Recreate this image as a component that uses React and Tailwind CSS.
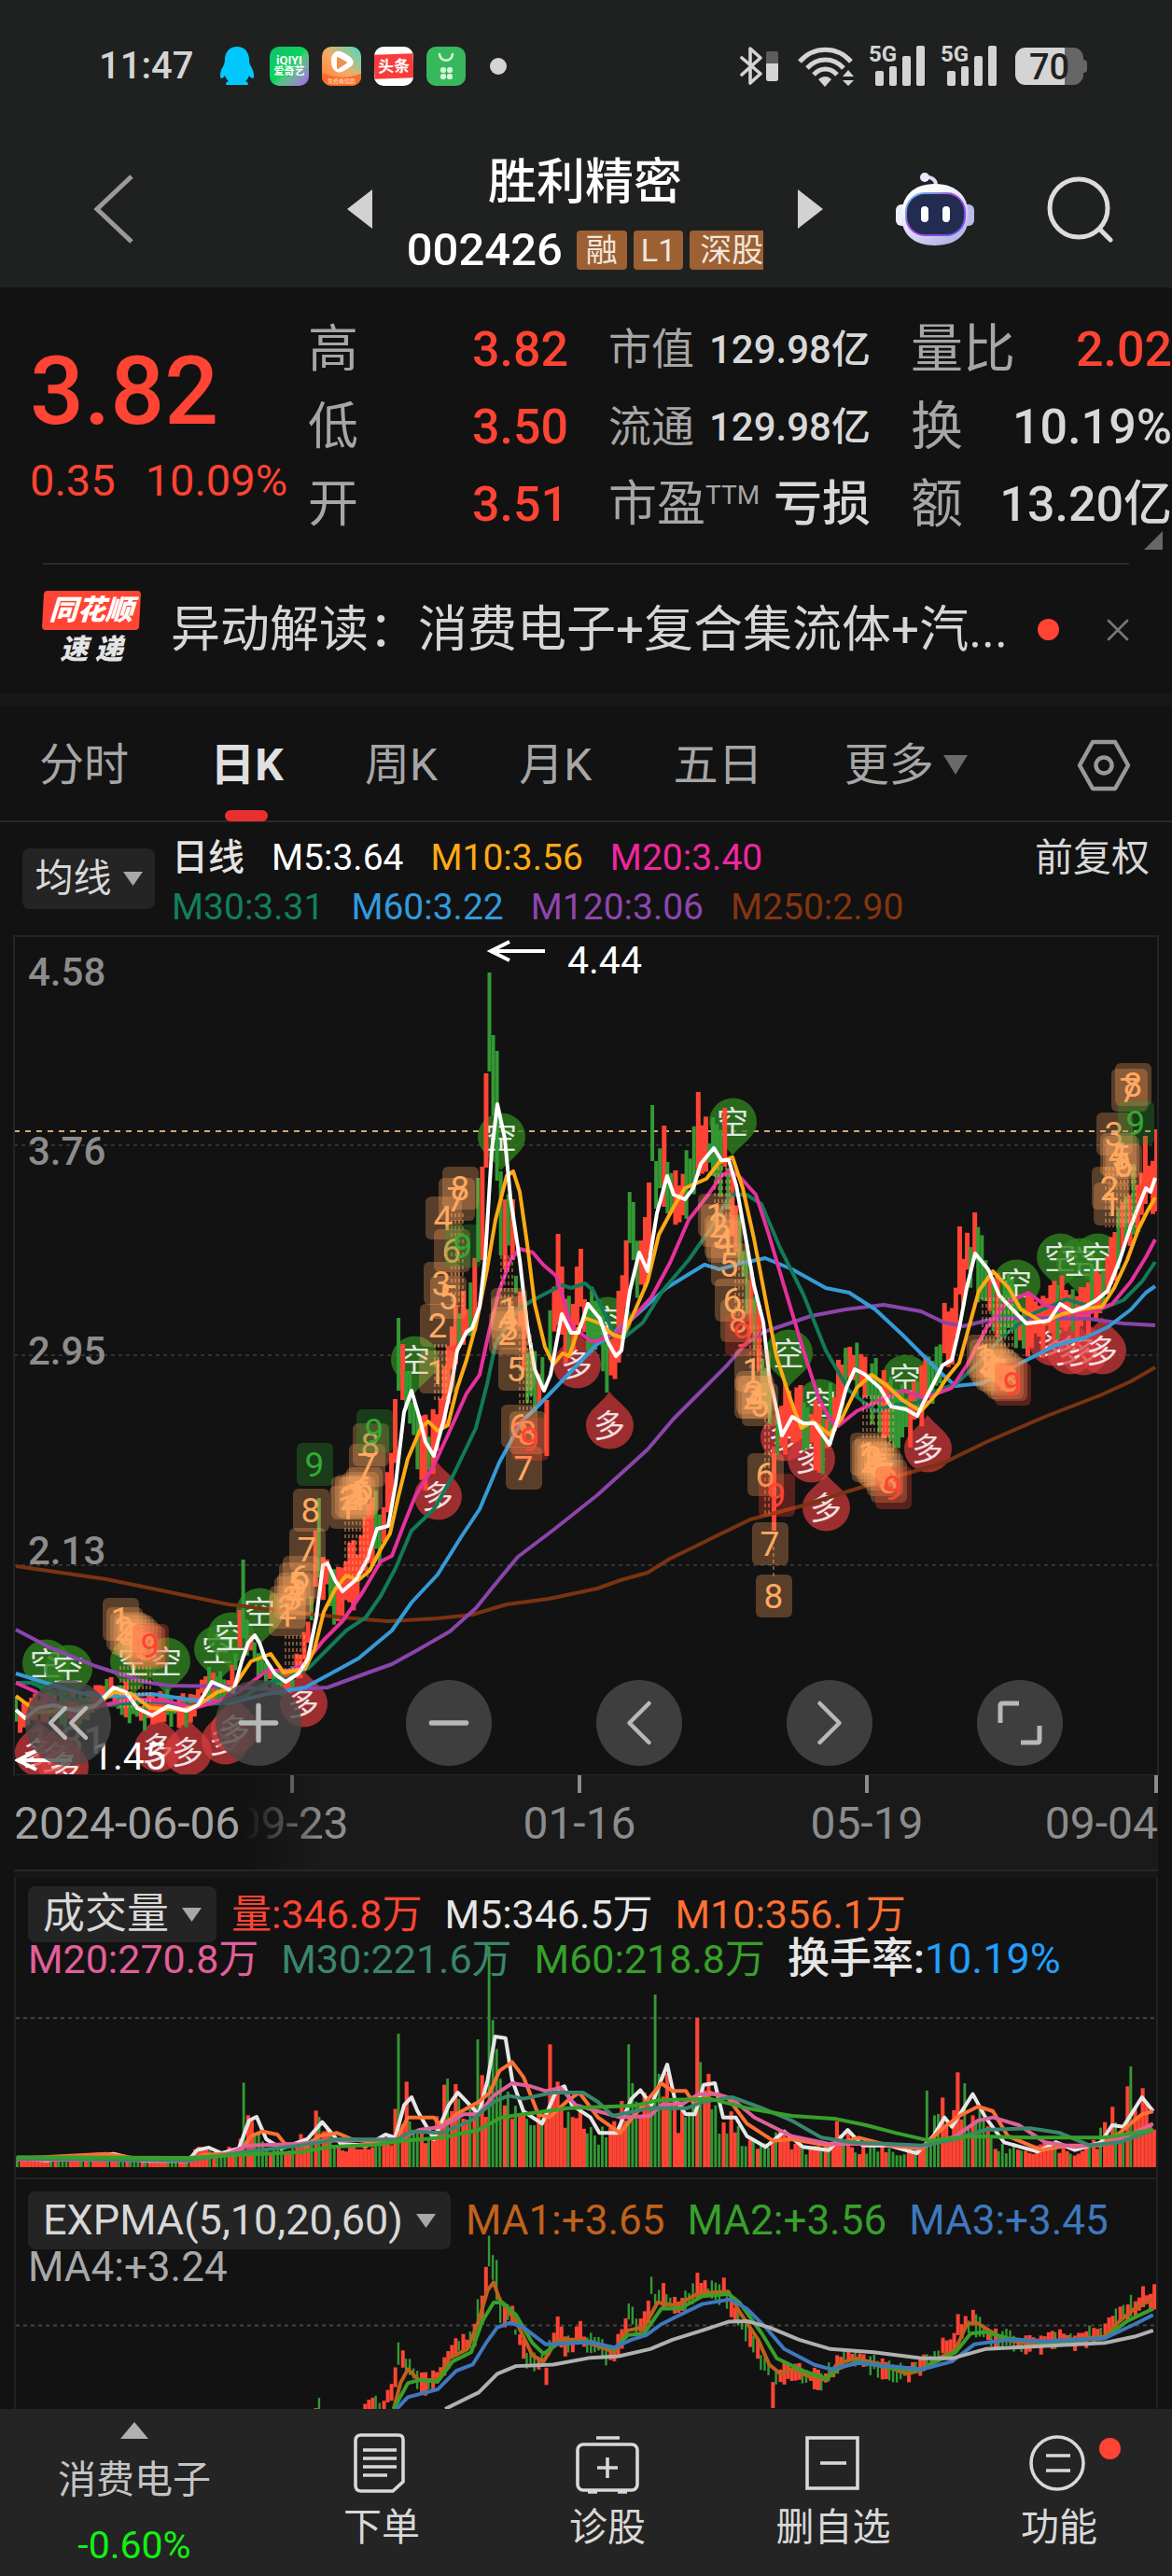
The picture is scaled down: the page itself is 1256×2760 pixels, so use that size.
import { ChevronLeft, ChevronRight, ChevronsLeft, Minus, Plus, X } from 'lucide-react';

const RED = '#ff4433';
const GREEN = '#339933';

const parse = (s) => s.trim().split(/\s+/).map((p) => p.split(',').map(Number));

// moving averages of the price chart
const M5 = parse(`17,1832 27,1841 41,1830 57,1827 82,1833 102,1828 122,1808 135,1813 147,1830 163,1838 180,1828 200,1833 212,1827 227,1802 241,1808 250,1813 259,1780 266,1760 273,1752 278,1760 284,1777 295,1794 306,1802 320,1793 330,1777 339,1733 346,1677 351,1675 359,1693 367,1705 382,1692 394,1670 404,1638 416,1635 424,1590 433,1513 441,1490 449,1517 456,1545 465,1560 476,1520 484,1483 490,1447 500,1427 506,1423 514,1400 520,1347 527,1233 533,1183 541,1220 547,1283 557,1350 565,1420 573,1467 583,1490 590,1473 602,1408 612,1428 620,1428 630,1397 643,1413 651,1437 660,1453 666,1447 675,1383 685,1342 694,1362 704,1300 715,1260 722,1280 734,1285 743,1273 751,1247 765,1230 773,1243 781,1243 789,1270 798,1320 808,1377 818,1417 825,1480 828,1490 838,1538 849,1518 861,1525 873,1525 889,1548 898,1520 907,1487 916,1467 926,1472 943,1487 955,1507 971,1510 983,1517 991,1500 1000,1483 1010,1463 1020,1457 1028,1423 1036,1380 1045,1343 1059,1360 1071,1388 1085,1403 1100,1418 1124,1415 1136,1397 1149,1405 1163,1400 1175,1393 1187,1383 1200,1350 1212,1313 1220,1293 1228,1273 1233,1277 1238,1262`);

const AVERAGES = [
  { color: '#7a3312', points: parse(`17,1678 114,1692 163,1702 245,1719 294,1725 367,1733 416,1737 469,1734 506,1730 543,1719 588,1713 640,1702 665,1693 694,1685 718,1670 755,1652 804,1628 861,1613 902,1600 967,1580 1012,1567 1057,1545 1122,1517 1179,1495 1212,1480 1238,1465`) },
  { color: '#8a45ab', points: parse(`17,1746 53,1765 102,1785 155,1802 180,1806 245,1807 302,1811 351,1808 392,1793 420,1783 449,1767 482,1748 510,1723 531,1697 555,1668 592,1640 640,1602 661,1583 694,1553 722,1520 759,1483 779,1463 796,1443 816,1428 869,1410 906,1403 947,1398 987,1405 1012,1417 1032,1421 1065,1413 1106,1412 1167,1413 1204,1418 1238,1420`) },
  { color: '#359bd8', points: parse(`17,1793 49,1803 82,1813 110,1818 163,1815 196,1820 245,1825 286,1815 327,1808 351,1795 384,1777 420,1747 441,1717 469,1687 494,1647 514,1617 535,1567 559,1523 576,1507 600,1482 640,1440 673,1417 714,1380 755,1355 771,1360 796,1353 820,1348 849,1360 885,1380 910,1385 938,1403 967,1430 1004,1467 1024,1485 1053,1482 1089,1463 1130,1442 1163,1433 1187,1422 1212,1403 1228,1385 1238,1378`) },
  { color: '#127a59', points: parse(`17,1803 33,1803 57,1813 82,1822 106,1828 163,1823 204,1827 237,1825 261,1818 286,1803 310,1798 331,1787 351,1767 371,1747 392,1733 408,1710 424,1680 441,1640 465,1617 486,1580 510,1530 522,1483 531,1440 555,1403 571,1393 602,1377 612,1380 627,1375 636,1383 649,1410 657,1427 669,1433 689,1417 710,1383 738,1350 759,1320 783,1280 800,1280 816,1290 836,1337 861,1387 885,1447 910,1490 938,1512 959,1505 983,1503 1004,1490 1024,1483 1049,1460 1073,1433 1106,1408 1143,1392 1179,1403 1204,1393 1224,1373 1238,1352`) },
  { color: '#e6309c', points: parse(`17,1803 37,1812 57,1823 78,1835 106,1828 143,1820 180,1823 208,1830 233,1823 257,1812 286,1790 310,1790 327,1782 347,1757 367,1737 388,1707 408,1673 420,1667 433,1633 445,1603 465,1570 482,1533 500,1493 514,1473 524,1427 535,1383 547,1350 557,1338 571,1342 582,1355 596,1367 604,1393 612,1420 633,1437 640,1437 661,1427 677,1413 698,1390 718,1353 738,1307 759,1280 773,1260 781,1255 792,1260 810,1280 824,1323 840,1377 861,1447 877,1497 889,1520 898,1528 918,1512 943,1500 969,1490 991,1498 1020,1487 1036,1463 1057,1423 1077,1397 1102,1385 1118,1397 1143,1407 1167,1407 1192,1397 1212,1373 1228,1347 1238,1328`) },
  { color: '#ffaa14', points: parse(`17,1817 41,1835 61,1833 102,1827 122,1813 141,1815 161,1830 196,1832 212,1827 233,1813 250,1808 269,1780 290,1772 304,1792 327,1788 337,1767 347,1727 359,1703 371,1688 384,1693 396,1683 408,1660 418,1643 427,1603 437,1563 451,1530 459,1523 469,1533 480,1527 490,1487 500,1457 510,1420 522,1360 531,1307 543,1260 550,1255 557,1277 565,1333 573,1397 584,1443 593,1462 603,1450 610,1453 620,1423 627,1412 643,1418 657,1430 667,1433 681,1403 694,1373 706,1323 722,1293 734,1273 757,1263 771,1245 785,1240 796,1273 808,1327 820,1390 832,1453 843,1487 851,1510 859,1530 871,1523 889,1537 902,1520 918,1487 934,1473 951,1485 967,1500 987,1512 1004,1493 1014,1477 1028,1460 1049,1383 1064,1362 1081,1380 1094,1403 1118,1417 1138,1408 1163,1402 1181,1400 1194,1380 1208,1350 1220,1317 1230,1297 1238,1283`) },
  { color: '#ffffff', points: M5 },
];

// x, high, low, up
const PEAKS = [
  [261, 1671, 1755, 0], [257, 1725, 1765, 1], [341, 1605, 1690, 0], [337, 1640, 1700, 1], [429, 1412, 1490, 0], [433, 1440, 1500, 1],
  [512, 1262, 1352, 0], [517, 1250, 1350, 1], [521, 1150, 1251, 1], [525, 1042, 1148, 0], [529, 1109, 1195, 0],
  [533, 1126, 1265, 0], [537, 1255, 1345, 0], [541, 1285, 1360, 1], [549, 1285, 1350, 1], [585, 1500, 1560, 1],
  [597, 1322, 1420, 1], [601, 1357, 1430, 1], [617, 1357, 1420, 1], [621, 1338, 1400, 1], [649, 1440, 1492, 0],
  [669, 1329, 1400, 1], [673, 1277, 1332, 0], [677, 1288, 1350, 0], [697, 1267, 1345, 1], [701, 1184, 1244, 0],
  [705, 1244, 1295, 0], [713, 1206, 1293, 1], [749, 1170, 1260, 1], [765, 1197, 1260, 0], [777, 1187, 1250, 1],
  [829, 1550, 1640, 1], [1013, 1396, 1450, 1], [1029, 1314, 1387, 1], [1045, 1299, 1350, 1], [1225, 1217, 1290, 1],
  [1239, 1210, 1298, 1],
];

const noise = (n) => {
  const v = Math.sin(n * 12.9898) * 43758.5453;
  return v - Math.floor(v);
};

function valueAt(points, x) {
  const i = points.findIndex((p) => p[0] >= x);
  if (i === -1) return points[points.length - 1][1];
  if (i === 0) return points[0][1];
  const [x0, y0] = points[i - 1];
  const [x1, y1] = points[i];
  return y0 + ((y1 - y0) * (x - x0)) / (x1 - x0);
}

const CANDLES = Array.from({ length: 302 }, (_, i) => {
  const x = 17 + i * 4.06;
  const peak = PEAKS.find((p) => Math.abs(p[0] - x) <= 2.03);
  if (peak) return { x, top: peak[1], bottom: peak[2], up: !!peak[3] };
  const mid = valueAt(M5, x + 7);
  const size = x < 330 ? 0.5 : 1;
  const rising = valueAt(M5, x + 10) <= valueAt(M5, x + 1);
  return {
    x,
    top: mid - (8 + 34 * noise(i + 1)) * size,
    bottom: mid + (8 + 34 * noise(i + 400)) * size,
    up: rising ? noise(i + 77) < 0.78 : noise(i + 77) < 0.38,
  };
});

// center x, center y, digit, tone
const COUNTS = `129,1735,1,o 133,1745,2,o 137,1750,3,o 141,1752,4,o 145,1754,5,o 149,1758,6,o 153,1762,7,o 157,1765,8,o 161,1763,9,r
307,1730,1,o 308,1722,2,o 313,1712,3,o 316,1708,4,o 318,1697,5,o 322,1690,6,o 329,1660,7,o 333,1618,8,o 337,1569,9,g
372,1615,1,o 374,1605,2,o 378,1603,3,o 382,1605,4,o 386,1600,5,o 390,1595,6,o 393,1570,7,o 397,1548,8,o 401,1533,9,g
468,1470,1,o 469,1420,2,o 473,1375,3,o 475,1305,4,o 480,1390,5,o 484,1340,6,o 489,1285,7,o 493,1273,8,o 496,1335,9,g
545,1403,1,o 543,1428,2,o 546,1423,3,o 545,1412,4,o 553,1467,5,o 556,1528,6,o 561,1573,7,o 565,1535,8,o 568,1542,9,r
767,1302,1,o 770,1313,2,o 774,1325,3,o 776,1330,4,o 781,1355,5,o 785,1393,6,o 791,1415,8,o 796,1430,9,r
806,1468,1,o 806,1497,2,o 808,1492,3,o 810,1497,4,o 814,1505,5,o 820,1580,6,o 825,1654,7,o 829,1710,8,o 832,1602,9,r
930,1558,1,o 932,1565,2,o 935,1562,3,o 938,1568,4,o 941,1570,5,o 945,1574,6,o 948,1580,7,o 952,1587,8,o 957,1594,9,r
1055,1453,1,o 1058,1458,2,o 1061,1463,3,o 1065,1467,4,o 1069,1469,5,o 1073,1472,6,o 1077,1476,7,o 1081,1478,8,o 1085,1483,9,r
1191,1290,1,o 1189,1273,2,o 1194,1215,3,o 1198,1237,4,o 1201,1240,5,o 1204,1248,6,o 1210,1168,7,o 1214,1162,8,o 1217,1203,9,g`
  .split(/\s+/)
  .map((s) => s.split(','));

const TONES = {
  o: { box: '#ffa55f', text: '#ffaa60' },
  g: { box: '#33a033', text: '#33a833' },
  r: { box: '#ff4433', text: '#ff4433' },
};

// dashed strings between the count boxes and their candles: x from, x to, y from, y to
const STRINGS = [
  [129, 161, 1785, 1830], [306, 326, 1752, 1790], [370, 394, 1630, 1690], [466, 478, 1440, 1500], [484, 496, 1300, 1400],
  [537, 549, 1345, 1400], [557, 569, 1430, 1512], [766, 782, 1250, 1310], [788, 796, 1350, 1410], [804, 818, 1420, 1470],
  [820, 824, 1520, 1625], [829, 829, 1650, 1690], [925, 957, 1495, 1560], [1053, 1085, 1390, 1450], [1185, 1217, 1250, 1315],
];

const SHORTS = parse(`49,1782 73,1788 143,1780 178,1780 233,1767 247,1753 278,1727 444,1457 537,1218 651,1415 785,1202 845,1450 879,1503 970,1477 1089,1375 1136,1347 1157,1352 1176,1347`);
const LONGS = parse(`41,1878 61,1883 69,1893 169,1873 201,1877 241,1865 251,1853 325,1825 469,1603 618,1462 653,1527 840,1540 869,1563 885,1615 994,1552 1128,1438 1147,1447 1161,1448 1181,1447`);

const VOLUME_M5 = parse(`20,930 60,938 110,925 150,917 190,940 250,940 262,905 278,897 295,915 318,900 332,810 342,798 355,870 375,900 410,870 430,815 455,885 490,890 515,855 528,865 540,760 550,735 558,780 580,870 600,760 612,720 640,790 652,680 662,540 676,545 685,680 700,780 725,820 745,710 755,700 765,760 790,800 802,850 825,850 845,740 857,712 872,760 893,630 903,740 918,790 930,790 942,695 957,690 968,800 985,800 1000,860 1025,895 1050,845 1075,895 1110,905 1135,840 1155,890 1190,890 1228,915 1250,860 1265,800 1275,830 1303,725 1320,800 1345,880 1390,910 1415,880 1440,905 1475,880 1490,825 1505,830 1530,735 1545,780`);

const VOLUME_LINES = [
  { color: '#e6e6e6', points: VOLUME_M5 },
  { color: '#ff7033', points: parse(`20,932 140,917 190,935 250,940 270,920 318,915 335,860 350,845 370,855 380,885 410,890 425,860 450,850 470,870 500,880 530,870 545,800 580,800 590,830 610,790 640,750 655,720 668,650 685,622 700,670 720,790 735,800 760,745 775,720 800,800 830,850 850,790 875,720 885,690 900,715 918,715 930,760 950,720 975,740 1000,820 1035,875 1060,870 1110,890 1150,865 1190,890 1235,900 1260,840 1285,795 1310,765 1330,780 1350,860 1395,905 1430,890 1475,890 1500,850 1530,790 1545,780`) },
  { color: '#e0609a', points: parse(`20,935 250,938 300,920 330,890 400,885 430,875 530,870 560,840 590,830 620,790 640,790 660,730 685,690 710,700 730,715 750,705 770,760 800,780 830,800 870,795 885,760 915,755 935,725 960,725 980,740 1010,800 1060,860 1110,885 1180,885 1235,895 1280,860 1310,810 1330,800 1365,825 1400,880 1440,895 1480,885 1510,860 1545,820`) },
  { color: '#3a866c', points: parse(`20,932 250,938 330,910 400,890 450,870 530,872 550,845 590,850 630,810 660,750 680,730 700,740 740,720 780,720 800,750 820,795 870,770 920,770 940,750 980,735 1020,770 1060,810 1100,865 1140,880 1235,890 1280,870 1320,840 1380,835 1420,850 1460,890 1500,880 1545,840`) },
  { color: '#37a02a', points: parse(`20,928 250,930 320,920 400,912 440,895 500,888 540,875 590,865 640,840 670,800 700,790 760,770 850,762 880,745 950,740 1000,770 1060,795 1120,805 1160,825 1200,850 1245,875 1300,860 1380,865 1480,865 1545,840`) },
];

// x, top, up
const VOLUME_PEAKS = [
  [325, 688, 0], [331, 793, 1], [420, 778, 1], [426, 798, 0], [535, 531, 0], [541, 685, 1], [591, 695, 1], [596, 675, 0],
  [611, 693, 1], [640, 549, 0], [646, 664, 1], [655, 250, 0], [661, 487, 0], [666, 580, 0], [670, 676, 0], [735, 565, 1],
  [746, 685, 1], [840, 565, 0], [845, 690, 0], [875, 405, 0], [880, 660, 0], [891, 658, 1], [935, 480, 1], [940, 622, 0],
  [950, 660, 1], [1120, 812, 1], [1244, 714, 0], [1264, 736, 1], [1284, 655, 1], [1290, 690, 0], [1489, 766, 1],
  [1509, 700, 1], [1514, 636, 0], [1530, 706, 1],
];

const VOLUMES = CANDLES.map((c, i) => {
  const x = 21 + i * 5.065;
  const peak = VOLUME_PEAKS.find((p) => Math.abs(p[0] - x) <= 2.54);
  if (peak) return { x, top: peak[1], up: !!peak[2] };
  const height = Math.min(960 - valueAt(VOLUME_M5, x + 8), 215);
  return { x, top: 960 - height * (0.6 + 0.6 * noise(i + 900)), up: c.up };
});

const EXPMA_LINES = [
  { color: '#bd611c', points: parse(`526,783 535,700 545,655 560,690 585,690 600,620 625,590 640,500 652,400 660,375 668,430 690,500 712,610 727,630 745,560 775,560 800,580 822,600 840,530 862,520 880,440 905,450 935,410 975,405 990,470 1015,560 1030,640 1045,670 1060,655 1085,680 1107,690 1120,640 1145,620 1180,640 1215,670 1238,655 1250,630 1280,590 1295,510 1308,505 1325,530 1345,560 1375,570 1480,550 1500,500 1520,460 1535,440 1545,430`) },
  { color: '#37a02a', points: parse(`526,783 545,700 560,690 585,695 605,630 630,600 645,500 660,440 672,440 690,480 712,570 727,605 745,575 790,565 822,590 840,545 862,540 885,460 910,460 940,420 975,412 990,440 1020,540 1040,620 1075,660 1107,685 1125,650 1150,630 1190,650 1230,660 1250,635 1280,600 1300,540 1320,535 1350,555 1400,570 1480,555 1510,500 1545,460`) },
  { color: '#3f78bd', points: parse(`530,783 545,745 585,720 610,660 632,640 650,570 665,520 682,505 700,520 730,575 790,568 822,585 845,560 865,545 885,510 910,480 940,445 978,430 1000,460 1025,520 1050,590 1090,640 1112,655 1150,635 1190,645 1235,655 1275,630 1305,575 1350,560 1400,565 1480,555 1520,510 1545,480`) },
  { color: '#b0b0b0', points: parse(`595,783 640,730 665,670 690,645 740,640 790,618 828,613 870,590 900,560 940,530 975,502 1000,500 1030,520 1070,560 1112,590 1170,600 1235,620 1275,620 1320,590 1400,580 1480,570 1520,550 1545,530`) },
];

function Line({ points, color, width = 4 }) {
  return (
    <polyline
      points={points.map((p) => p.join(',')).join(' ')}
      fill="none"
      stroke={color}
      strokeWidth={width}
      strokeLinejoin="round"
      vectorEffect="non-scaling-stroke"
    />
  );
}

function Caret({ className = 'h-[15px] w-[21px] text-[#a8a8a8]' }) {
  return (
    <svg viewBox="0 0 20 14" preserveAspectRatio="none" className={`fill-current ${className}`}>
      <path d="M0 0h20L10 14z" />
    </svg>
  );
}

function Signal() {
  return (
    <div className="relative h-[44px] w-[60px]">
      <span className="absolute -top-1 left-0 text-[24px] leading-[26px] font-bold">5G</span>
      <svg viewBox="0 0 60 44" className="h-full w-full fill-current">
        <rect x="7" y="27" width="9" height="16" rx="2" />
        <rect x="22" y="22" width="8" height="21" rx="2" />
        <rect x="36" y="11" width="9" height="32" rx="2" />
        <rect x="51" y="0" width="9" height="43" rx="2" />
      </svg>
    </div>
  );
}

function StatusBar() {
  return (
    <div className="flex items-center justify-between pt-[49px] pr-[91px] pl-[106px] text-[#d4d4d4]">
      <div className="flex h-[44px] items-center">
        <span className="w-[130px] text-[40px] leading-[44px] font-medium">11:47</span>
        <svg viewBox="0 0 36 42" className="mr-[17px] h-[42px] w-9">
          <path
            d="M18 0C10 0 5 6 5 14c0 3-1 6-3 9-2 4-3 10-1 11 1 0 3-1 4-3 1 3 2 4 4 6-3 1-4 4-2 4h22c2 0 1-3-2-4 2-2 3-3 4-6 1 2 3 3 4 3 2-1 1-7-1-11-2-3-3-6-3-9C31 6 26 0 18 0z"
            fill="#00c8ff"
          />
        </svg>
        <div className="mr-[14px] flex h-[42px] w-[42px] flex-col items-center justify-center rounded-[10px] bg-linear-to-br from-[#0fbf6a] via-[#0bd45c] to-[#a353ee] text-[11px] leading-[12px] font-bold text-white">
          <span className="text-[13px]">iQIYI</span>
          <span>爱奇艺</span>
        </div>
        <svg viewBox="0 0 42 42" className="mr-[14px] h-[42px] w-[42px]">
          <defs>
            <linearGradient id="play" x1="0" y1="1" x2="1" y2="0">
              <stop offset="0" stopColor="#ff7a30" />
              <stop offset="0.5" stopColor="#f5ab66" />
              <stop offset="1" stopColor="#3fe0c8" />
            </linearGradient>
          </defs>
          <rect width="42" height="42" rx="10" fill="url(#play)" />
          <path d="M0 28c14 6 28 6 42 1v3a10 10 0 0 1-10 10H10A10 10 0 0 1 0 32z" fill="#ff6a2a" />
          <path d="M14 6c4-3 9 0 15 4s6 9 1 12-10 7-14 5-6-6-6-11 1-8 4-10z" fill="#fff" />
          <path d="M17 12l9 5-9 6z" fill="#ee9050" stroke="#ee9050" strokeWidth="2" strokeLinejoin="round" />
          <text x="21" y="39" textAnchor="middle" fontSize="6" fill="#ffe0c8">免费看短剧</text>
        </svg>
        <div className="mr-[14px] flex h-[42px] w-[42px] items-center overflow-hidden rounded-[10px] bg-white">
          <span className="w-full -rotate-2 bg-[#f83c3c] text-center text-[17px] leading-[26px] font-bold text-white">头条</span>
        </div>
        <svg viewBox="0 0 42 42" className="mr-[26px] h-[42px] w-[42px]">
          <rect width="42" height="42" rx="10" fill="#37b85c" />
          <path d="M14 8c1 9 13 9 14 0" fill="none" stroke="#d8f5d8" strokeWidth="2.5" strokeLinecap="round" />
          <g fill="#d8f5d8">
            <rect x="15" y="22" width="6" height="6" rx="2.5" />
            <rect x="22" y="22" width="6" height="6" rx="2.5" />
            <rect x="15" y="29" width="6" height="6" rx="2.5" />
            <rect x="22" y="29" width="6" height="6" rx="2.5" />
          </g>
        </svg>
        <i className="h-[18px] w-[18px] rounded-full bg-current" />
      </div>
      <div className="flex h-[44px] items-center">
        <svg viewBox="0 0 42 42" className="mr-[20px] h-[42px] w-[42px]">
          <path d="M2 12l20 17-11 10V2l11 10L2 30" fill="none" stroke="currentColor" strokeWidth="3.6" strokeLinejoin="round" strokeLinecap="round" />
          <rect x="28" y="5" width="13" height="32" rx="2" fill="#5c5c5c" />
          <path d="M28 18h13v16a3 3 0 0 1-3 3h-7a3 3 0 0 1-3-3z" fill="currentColor" />
        </svg>
        <svg viewBox="0 0 60 44" className="mr-[16px] h-[44px] w-[60px]">
          <g fill="none" stroke="currentColor" strokeWidth="5">
            <path d="M2 17C17 0 42 0 57 17" />
            <path d="M10 24c11-12 28-12 39 0" />
            <path d="M17 31c7-8 18-8 25 0" />
          </g>
          <path d="M22 36c5-4 10-4 14 0l-7 8zM48 33l6-7 6 7zM48 37h12l-6 6z" fill="currentColor" />
        </svg>
        <div className="mr-[17px]">
          <Signal />
        </div>
        <div className="mr-[20px]">
          <Signal />
        </div>
        <div className="flex items-center">
          <div className="h-[40px] w-[73px] rounded-[11px] bg-linear-to-r from-[#d4d4d4] from-73% to-[#666] to-73% text-center text-[38px] leading-[42px] font-medium text-[#1f2120]">
            70
          </div>
          <i className="h-[14px] w-[4px] rounded-r bg-[#666]" />
        </div>
      </div>
    </div>
  );
}

function Robot() {
  return (
    <svg viewBox="0 0 84 78" className="h-[78px] w-[84px]">
      <defs>
        <linearGradient id="shell" x1="0" y1="0" x2="0.6" y2="1">
          <stop offset="0.3" stopColor="#fafaff" />
          <stop offset="1" stopColor="#b9b6e8" />
        </linearGradient>
        <linearGradient id="rim" x1="0" y1="0" x2="1" y2="1">
          <stop offset="0" stopColor="#5fd0f0" />
          <stop offset="0.5" stopColor="#b040d8" />
          <stop offset="1" stopColor="#5558f0" />
        </linearGradient>
      </defs>
      <rect x="0" y="34" width="14" height="23" rx="6" fill="#eeeefc" />
      <rect x="70" y="34" width="14" height="23" rx="6" fill="#b9b9ea" />
      <path d="M30 5c8-1 13 2 13 9" fill="none" stroke="#dcdcf5" strokeWidth="4" />
      <circle cx="31" cy="5" r="5" fill="#eaeaff" />
      <path d="M42 12c24 0 36 14 36 34 0 21-14 32-36 32S6 67 6 46c0-20 12-34 36-34z" fill="url(#shell)" />
      <rect x="11" y="22" width="63" height="45" rx="20" fill="#222c50" stroke="url(#rim)" strokeWidth="2" />
      <rect x="27" y="36" width="8" height="17" rx="4" fill="#fff" />
      <rect x="50" y="36" width="8" height="17" rx="4" fill="#fff" />
    </svg>
  );
}

function Header() {
  return (
    <header className="h-[308px] bg-[#1f2120]">
      <StatusBar />
      <div className="flex items-center justify-between pt-[53px] pr-[62px] pl-[100px]">
        <button aria-label="返回" className="text-[#9a9a9a]">
          <svg viewBox="0 0 44 76" className="h-[76px] w-[44px]">
            <path d="M41 3L4 38l37 35" fill="none" stroke="currentColor" strokeWidth="5" />
          </svg>
        </button>
        <div className="ml-[150px] flex items-center gap-[36px]">
          <button aria-label="上一只" className="text-[#d2d2d2]">
            <svg viewBox="0 0 27 42" className="h-[42px] w-[27px] fill-current">
              <path d="M27 0v42L0 21z" />
            </svg>
          </button>
          <div className="flex w-[384px] flex-col items-center gap-1 pt-[16px]">
            <h1 className="text-[52px] leading-[68px] font-medium text-white">胜利精密</h1>
            <div className="flex items-center gap-[7px] text-[34px] leading-[42px] text-[#f0e6dc]">
              <span className="mr-2 text-[49px] leading-[68px] font-medium text-white">002426</span>
              <span className="rounded bg-[#9c6033] px-[10px]">融</span>
              <span className="rounded bg-[#9c6033] px-[8px]">L1</span>
              <span className="rounded-l bg-[#9c6033] pl-[11px]">深股</span>
            </div>
          </div>
          <button aria-label="下一只" className="text-[#d2d2d2]">
            <svg viewBox="0 0 27 42" className="h-[42px] w-[27px] fill-current">
              <path d="M0 0v42l27-21z" />
            </svg>
          </button>
        </div>
        <button aria-label="助手">
          <Robot />
        </button>
        <button aria-label="搜索" className="text-[#dcdcdc]">
          <svg viewBox="0 0 72 72" className="h-[72px] w-[72px]">
            <g fill="none" stroke="currentColor" strokeWidth="5" strokeLinecap="round">
              <circle cx="34" cy="35" r="31" />
              <path d="M57 58l11 11" />
            </g>
          </svg>
        </button>
      </div>
    </header>
  );
}

function Quote() {
  return (
    <section className="flex pt-[25px] pb-[21px]">
      <div className="w-[330px] shrink-0 pl-[32px] text-[#ff4433]">
        <div className="pt-[30px] text-[102px] leading-[112px] font-medium">3.82</div>
        <div className="mt-[12px] flex gap-[32px] text-[47px] leading-[56px]">
          <span>0.35</span>
          <span>10.09%</span>
        </div>
      </div>
      <dl className="flex w-[279px] shrink-0 flex-col text-[54px] leading-[83px]">
        {[['高', '3.82'], ['低', '3.50'], ['开', '3.51']].map(([k, v]) => (
          <div key={k} className="flex justify-between">
            <dt className="text-[#a6a6a6]">{k}</dt>
            <dd className="text-[52px] font-medium text-[#ff4433]">{v}</dd>
          </div>
        ))}
      </dl>
      <dl className="ml-[43px] flex w-[281px] shrink-0 flex-col leading-[83px] text-[#d8d8d8]">
        {[['市值', '129.98亿'], ['流通', '129.98亿']].map(([k, v]) => (
          <div key={k} className="flex justify-between">
            <dt className="text-[46px] text-[#a6a6a6]">{k}</dt>
            <dd className="text-[42px] font-medium">{v}</dd>
          </div>
        ))}
        <div className="flex justify-between">
          <dt className="flex text-[52px] text-[#a6a6a6]">
            市盈<span className="text-[28px] leading-[64px]">TTM</span>
          </dt>
          <dd className="text-[52px] font-medium">亏损</dd>
        </div>
      </dl>
      <dl className="ml-[43px] flex flex-1 flex-col text-[56px] leading-[83px] text-[#d8d8d8]">
        {[['量比', '2.02', 'text-[#ff4433]'], ['换', '10.19%', ''], ['额', '13.20亿', '']].map(([k, v, tone]) => (
          <div key={k} className="flex justify-between whitespace-nowrap">
            <dt className="text-[#a6a6a6]">{k}</dt>
            <dd className={`text-[52px] font-medium ${tone}`}>{v}</dd>
          </div>
        ))}
      </dl>
    </section>
  );
}

function Notice() {
  return (
    <section className="relative mx-[46px] border-t-2 border-[#2a2a2a]">
      <svg viewBox="0 0 20 20" className="absolute -top-[36px] -right-[36px] h-5 w-5 fill-[#666]">
        <path d="M20 0v20H0z" />
      </svg>
      <div className="-mr-[8px] flex h-[137px] items-center pt-[2px]">
        <div className="flex w-[104px] shrink-0 flex-col items-center text-[30px] leading-[42px] font-black italic">
          <span className="w-full -skew-x-3 rounded bg-[#ff4433] text-center text-white">同花顺</span>
          <span className="text-[#e4e4e4]">速 递</span>
        </div>
        <a href="#news" className="ml-[33px] flex-1 truncate text-[53px] leading-[72px] whitespace-nowrap text-[#d6d6d6]">
          异动解读：消费电子+复合集流体+汽...
        </a>
        <i className="h-[23px] w-[23px] rounded-full bg-[#ff4433]" />
        <button aria-label="关闭" className="ml-[43px] text-[#777]">
          <X size={40} strokeWidth={1.6} />
        </button>
      </div>
    </section>
  );
}

function Tabs() {
  return (
    <nav className="flex h-[125px] items-center justify-between border-b-2 border-[#2a2a2a] pt-[4px] pr-[44px] pl-[42px] text-[48px] leading-[60px] text-[#a6a6a6]">
      <button>分时</button>
      <button className="relative font-bold text-[#e0e0e0]">
        日K
        <i className="absolute -bottom-[30px] left-1/2 h-[12px] w-[46px] -translate-x-1/2 rounded-full bg-[#e93030]" />
      </button>
      <button>周K</button>
      <button>月K</button>
      <button>五日</button>
      <button className="flex items-center gap-[10px]">
        更多
        <Caret className="h-[21px] w-[26px] text-[#6a6a6a]" />
      </button>
      <button aria-label="设置" className="ml-[30px] text-[#999]">
        <svg viewBox="0 0 58 58" className="h-[58px] w-[58px]">
          <g fill="none" stroke="currentColor" strokeWidth="4.5" strokeLinejoin="round">
            <path d="M17 4h24l14 25-14 25H17L3 29z" />
            <circle cx="29" cy="29" r="8.5" />
          </g>
        </svg>
      </button>
    </nav>
  );
}

function Legend() {
  return (
    <div className="flex items-start pt-[12px] pr-[24px] pl-[24px] text-[39px] leading-[53px]">
      <button className="mt-[16px] flex h-[65px] w-[142px] items-center justify-center gap-3 rounded-lg bg-[#242424] text-[41px] text-[#d8d8d8]">
        均线
        <Caret />
      </button>
      <div className="ml-[18px] flex-1">
        <div className="flex gap-[29px]">
          <span className="font-medium text-[#e2e2e2]">日线</span>
          <span className="text-white">M5:3.64</span>
          <span className="text-[#ffaa14]">M10:3.56</span>
          <span className="text-[#f026a0]">M20:3.40</span>
        </div>
        <div className="flex gap-[29px]">
          <span className="text-[#127f5c]">M30:3.31</span>
          <span className="text-[#329bdc]">M60:3.22</span>
          <span className="text-[#8f45b0]">M120:3.06</span>
          <span className="text-[#84350f]">M250:2.90</span>
        </div>
      </div>
      <span className="text-[41px] text-[#d8d8d8]">前复权</span>
    </div>
  );
}

function PriceChart() {
  return (
    <svg viewBox="15 1003 1226 899" className="block w-full">
      <g stroke="#333" strokeWidth="2" strokeDasharray="4 4">
        <path d="M15 1227H1241M15 1452H1241M15 1677H1241" />
      </g>
      <path d="M15 1212H1241" stroke="#d3a878" strokeWidth="2" strokeDasharray="6 6" />
      <g fontSize="42" fontWeight="500" fill="#8c8c8c">
        <text x="30" y="1056">4.58</text>
        <text x="30" y="1248">3.76</text>
        <text x="30" y="1462">2.95</text>
        <text x="30" y="1676">2.13</text>
        <text x="30" y="1879">1.31</text>
      </g>
      <g fontSize="34" fill="#fff" textAnchor="middle">
        {SHORTS.map(([x, y], i) => (
          <g key={i}>
            <path d={`M${x - 25} ${y}a25.500 25.500 0 1 1 51 0c0 16-15 22-26 36-9-14-25-20-25-36z`} fill="#30801f" opacity="0.8" />
            <text x={x} y={y + 13} opacity="0.85">空</text>
          </g>
        ))}
        {LONGS.map(([x, y], i) => (
          <g key={i}>
            <path d={`M${x - 25} ${y}a25.500 25.500 0 1 0 51 0c0-16-15-22-26-36-9 14-25 20-25 36z`} fill="#d83a3c" opacity="0.7" />
            <text x={x} y={y + 13} opacity="0.85">多</text>
          </g>
        ))}
      </g>
      {CANDLES.map((c) => (
        <rect key={c.x} x={c.x - 2} y={c.top} width={c.up ? 5 : 4} height={c.bottom - c.top} fill={c.up ? RED : GREEN} />
      ))}
      {AVERAGES.map((a) => (
        <Line key={a.color} {...a} />
      ))}
      {STRINGS.map(([x0, x1, y0, y1]) =>
        Array.from({ length: Math.floor((x1 - x0) / 4) + 1 }, (_, i) => (
          <path
            key={`${x0}-${i}`}
            d={`M${x0 + i * 4} ${y0}V${y1}`}
            stroke="#ffa55f"
            strokeOpacity="0.6"
            strokeWidth="1.5"
            strokeDasharray="4 3"
          />
        )),
      )}
      <g fontSize="37" textAnchor="middle">
        {COUNTS.map(([cx, cy, digit, tone], i) => (
          <g key={i}>
            <rect x={cx - 19} y={cy - 23} width="39" height="46" rx="6" fill={TONES[tone].box} opacity="0.3" />
            <text x={cx} y={Number(cy) + 13} fill={TONES[tone].text}>{digit}</text>
          </g>
        ))}
      </g>
      <g fill="none" stroke="#fff" strokeWidth="4">
        <path d="M584 1019H526M546 1009L526 1019L546 1029" />
        <path d="M77 1886H19M39 1876L19 1886L39 1896" />
      </g>
      <g fontSize="41" fill="#fff">
        <text x="608" y="1043">4.44</text>
        <text x="98" y="1896">1.45</text>
      </g>
    </svg>
  );
}

function ChartTools() {
  const circle = 'grid h-[92px] w-[92px] place-items-center rounded-full bg-[#4a4a4a]/80 text-[#b8b8b8]';
  return (
    <div className="absolute right-[102px] bottom-[10px] left-[12px] flex justify-between">
      <button aria-label="最早" className={circle}><ChevronsLeft size={76} strokeWidth={1.4} /></button>
      <button aria-label="放大" className={circle}><Plus size={64} strokeWidth={2} /></button>
      <button aria-label="缩小" className={circle}><Minus size={64} strokeWidth={2} /></button>
      <button aria-label="左移" className={circle}><ChevronLeft size={84} strokeWidth={1.3} /></button>
      <button aria-label="右移" className={circle}><ChevronRight size={84} strokeWidth={1.3} /></button>
      <button aria-label="全屏" className={circle}>
        <svg viewBox="0 0 48 48" className="h-12 w-12">
          <path d="M3 24V5a2 2 0 0 1 2-2h18M45 27v16a2 2 0 0 1-2 2H25" fill="none" stroke="currentColor" strokeWidth="5" />
        </svg>
      </button>
    </div>
  );
}

function DateAxis() {
  const mark = 'flex flex-col items-center gap-[9px] before:h-[19px] before:w-[4px] before:bg-[#8c8c8c]';
  return (
    <div className="relative border-b-2 border-[#262626] bg-[#1a1a1a] text-[48px] leading-[48px] text-[#8c8c8c]">
      <div className="grid h-[101px] grid-cols-[144fr_308fr_308fr_308fr_158fr]">
        <span />
        <time className={mark}>09-23</time>
        <time className={mark}>01-16</time>
        <time className={mark}>05-19</time>
        <time className="flex flex-col items-end gap-[9px] before:h-[19px] before:w-[4px] before:bg-[#8c8c8c]">09-04</time>
      </div>
      <time className="absolute inset-y-0 left-0 w-[330px] bg-linear-to-r from-[#121212] from-75% to-transparent pt-[28px] text-[#a4a4a4]">
        2024-06-06
      </time>
    </div>
  );
}

function VolumeChart() {
  return (
    <section className="grid border-x-2 border-[#222] pb-[11px]">
      <div className="z-10 pt-[9px] pl-[13px] text-[43px] [grid-area:1/1]">
        <div className="flex items-center gap-[24px] leading-[48px]">
          <button className="-mr-2 flex h-[60px] items-center gap-[14px] rounded-lg bg-[#242424] px-[16px] text-[45px] text-[#d8d8d8]">
            成交量
            <Caret />
          </button>
          <span className="text-[#ff4433]">量:346.8万</span>
          <span className="text-[#e6e6e6]">M5:346.5万</span>
          <span className="text-[#ff7033]">M10:356.1万</span>
        </div>
        <div className="flex gap-[24px] leading-[36px]">
          <span className="text-[#e0609a]">M20:270.8万</span>
          <span className="text-[#3a866c]">M30:221.6万</span>
          <span className="text-[#37a02a]">M60:218.8万</span>
          <span className="text-[45px] font-medium text-[#e6e6e6]">
            换手率:<span className="font-normal text-[#20a0ff]">10.19%</span>
          </span>
        </div>
      </div>
      <svg viewBox="19 30 1530 930" preserveAspectRatio="none" className="h-[310px] w-full [grid-area:1/1]">
        <path d="M19 481H1549" stroke="#444" strokeWidth="2" strokeDasharray="4 4" vectorEffect="non-scaling-stroke" />
        {VOLUMES.map((v) => (
          <rect key={v.x} x={v.x - 2} y={v.top} width={v.up ? 5.2 : 3.6} height={960 - v.top} fill={v.up ? RED : GREEN} />
        ))}
        {VOLUME_LINES.map((l) => (
          <Line key={l.color} {...l} />
        ))}
      </svg>
    </section>
  );
}

function ExpmaChart() {
  return (
    <section className="grid border-x-2 border-t-2 border-[#222]">
      <div className="pt-[13px] pl-[13px] text-[44px] leading-[38px] [grid-area:1/1]">
        <div className="flex items-center gap-[24px]">
          <button className="-mr-2 flex h-[62px] items-center gap-[14px] rounded-lg bg-[#242424] px-[16px] text-[45px] whitespace-nowrap text-[#d8d8d8]">
            EXPMA(5,10,20,60)
            <Caret />
          </button>
          <span className="text-[#c0621c]">MA1:+3.65</span>
          <span className="text-[#37a02a]">MA2:+3.56</span>
          <span className="text-[#3f78bd]">MA3:+3.45</span>
        </div>
        <span className="text-[#a8a8a8]">MA4:+3.24</span>
      </div>
      <svg viewBox="19 43 1530 740" preserveAspectRatio="none" className="z-10 h-[246px] w-full [grid-area:1/1]">
        <path d="M19 514H1549" stroke="#444" strokeWidth="2" strokeDasharray="4 4" vectorEffect="non-scaling-stroke" />
        {CANDLES.filter((c) => c.x > 330).map((c) => (
          <rect
            key={c.x}
            x={19 + (c.x - 17) * 1.248}
            y={225 + (c.top - 1042) * 0.928}
            width={c.up ? 5 : 3}
            height={(c.bottom - c.top) * 0.928}
            fill={c.up ? RED : GREEN}
          />
        ))}
        {EXPMA_LINES.map((l) => (
          <Line key={l.color} {...l} />
        ))}
      </svg>
    </section>
  );
}

const ICONS = {
  order: (
    <>
      <path d="M10 2h40q5 0 5 5v45L44 62H10q-6 0-6-6V8q0-6 6-6z" />
      <path d="M12 18h36M12 27h36M12 36h36M12 45h26" />
    </>
  ),
  diagnose: (
    <>
      <rect x="0" y="12" width="64" height="49" rx="6" />
      <path d="M20 5h25M32 26v22M21 37h22M11 63h10M43 63h10" />
    </>
  ),
  remove: (
    <>
      <rect x="4" y="5" width="54" height="54" />
      <path d="M18 32h28" />
    </>
  ),
  features: (
    <>
      <circle cx="30" cy="32" r="28" />
      <path d="M18 24h26M18 40h26" />
    </>
  ),
};

function BottomItem({ icon, label, dot }) {
  return (
    <button className="flex flex-1 flex-col items-center text-[41px] leading-[50px] text-[#d8d8d8]">
      <span className="relative">
        <svg viewBox="-2 0 68 66" className="mt-[26px] mb-[10px] h-[66px] w-[68px]" fill="none" stroke="currentColor" strokeWidth="3.6">
          {ICONS[icon]}
        </svg>
        {dot && <i className="absolute top-[31px] -right-[32px] h-[23px] w-[23px] rounded-full bg-[#ff4433]" />}
      </span>
      {label}
    </button>
  );
}

function BottomBar() {
  return (
    <footer className="flex h-[179px] bg-[#242424]">
      <button className="flex w-[288px] flex-col items-center pt-[14px] text-[41px] text-[#c4c4c4]">
        <svg viewBox="0 0 30 18" className="h-[18px] w-[30px] fill-[#b0b0b0]">
          <path d="M15 0l15 18H0z" />
        </svg>
        <span className="mt-[16px] leading-[56px]">消费电子</span>
        <span className="mt-[12px] leading-[60px] text-[#14f014]">-0.60%</span>
      </button>
      <BottomItem icon="order" label="下单" />
      <BottomItem icon="diagnose" label="诊股" />
      <BottomItem icon="remove" label="删自选" />
      <BottomItem icon="features" label="功能" dot />
    </footer>
  );
}

export default function App() {
  return (
    <div className="min-h-screen bg-[#121212] font-[Roboto,'Noto_Sans_CJK_SC',sans-serif]">
      <Header />
      <Quote />
      <Notice />
      <div className="mt-px h-[13px] bg-[#171717]" />
      <Tabs />
      <Legend />
      <main className="mx-[15px] mt-[4px]">
        <div className="relative outline-2 -outline-offset-1 outline-[#242424]">
          <PriceChart />
          <ChartTools />
        </div>
        <DateAxis />
        <div className="h-[7px] bg-[#171717]" />
        <VolumeChart />
        <ExpmaChart />
      </main>
      <BottomBar />
    </div>
  );
}
